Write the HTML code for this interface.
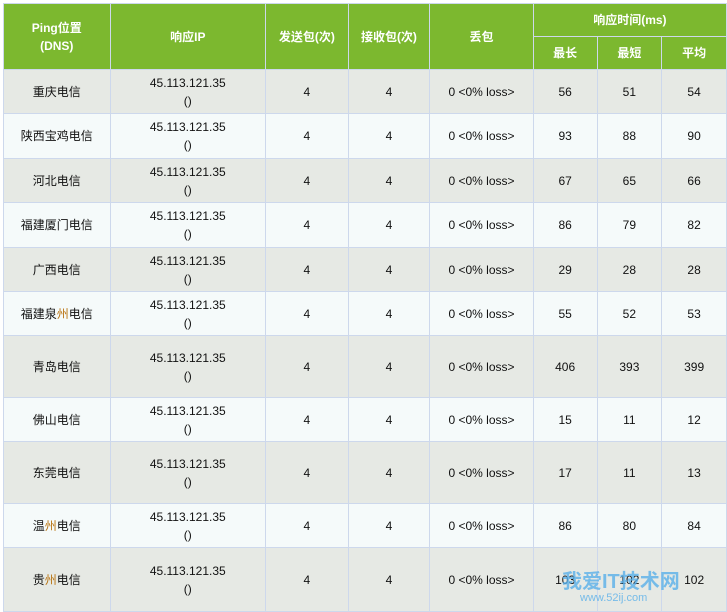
<!DOCTYPE html><html><head><meta charset="utf-8"><style>
body{margin:0;background:#fff;width:727px;height:611px;overflow:hidden;font-family:"Liberation Sans","Noto Sans CJK SC",sans-serif;font-size:12px;color:#111}
table{position:absolute;left:3px;top:3px;border-collapse:collapse;table-layout:fixed}
td,th{border:1px solid #cdd8ec;text-align:center;padding:0;line-height:18px}
th{background:#7cb82f;color:#fff;font-weight:bold}
tr.a td{background:#e6e9e4}
tr.b td{background:#f5fafa}
.o{color:#b8720f}
</style></head><body>
<table>
<colgroup><col style="width:107px"><col style="width:156px"><col style="width:83px"><col style="width:82px"><col style="width:104px"><col style="width:64px"><col style="width:65px"><col style="width:65px"></colgroup>
<tr style="height:33px"><th rowspan="2">Ping位置<br>(DNS)</th><th rowspan="2">响应IP</th><th rowspan="2">发送包(次)</th><th rowspan="2">接收包(次)</th><th rowspan="2">丢包</th><th colspan="3">响应时间(ms)</th></tr>
<tr style="height:33px"><th>最长</th><th>最短</th><th>平均</th></tr>
<tr class="a" style="height:44px"><td>重庆电信</td><td>45.113.121.35<br>()</td><td>4</td><td>4</td><td>0 &lt;0% loss&gt;</td><td>56</td><td>51</td><td>54</td></tr>
<tr class="b" style="height:45px"><td>陕西宝鸡电信</td><td>45.113.121.35<br>()</td><td>4</td><td>4</td><td>0 &lt;0% loss&gt;</td><td>93</td><td>88</td><td>90</td></tr>
<tr class="a" style="height:44px"><td>河北电信</td><td>45.113.121.35<br>()</td><td>4</td><td>4</td><td>0 &lt;0% loss&gt;</td><td>67</td><td>65</td><td>66</td></tr>
<tr class="b" style="height:45px"><td>福建厦门电信</td><td>45.113.121.35<br>()</td><td>4</td><td>4</td><td>0 &lt;0% loss&gt;</td><td>86</td><td>79</td><td>82</td></tr>
<tr class="a" style="height:44px"><td>广西电信</td><td>45.113.121.35<br>()</td><td>4</td><td>4</td><td>0 &lt;0% loss&gt;</td><td>29</td><td>28</td><td>28</td></tr>
<tr class="b" style="height:44px"><td>福建泉<span class="o">州</span>电信</td><td>45.113.121.35<br>()</td><td>4</td><td>4</td><td>0 &lt;0% loss&gt;</td><td>55</td><td>52</td><td>53</td></tr>
<tr class="a" style="height:62px"><td>青岛电信</td><td>45.113.121.35<br>()</td><td>4</td><td>4</td><td>0 &lt;0% loss&gt;</td><td>406</td><td>393</td><td>399</td></tr>
<tr class="b" style="height:44px"><td>佛山电信</td><td>45.113.121.35<br>()</td><td>4</td><td>4</td><td>0 &lt;0% loss&gt;</td><td>15</td><td>11</td><td>12</td></tr>
<tr class="a" style="height:62px"><td>东莞电信</td><td>45.113.121.35<br>()</td><td>4</td><td>4</td><td>0 &lt;0% loss&gt;</td><td>17</td><td>11</td><td>13</td></tr>
<tr class="b" style="height:44px"><td>温<span class="o">州</span>电信</td><td>45.113.121.35<br>()</td><td>4</td><td>4</td><td>0 &lt;0% loss&gt;</td><td>86</td><td>80</td><td>84</td></tr>
<tr class="a" style="height:64px"><td>贵<span class="o">州</span>电信</td><td>45.113.121.35<br>()</td><td>4</td><td>4</td><td>0 &lt;0% loss&gt;</td><td>103</td><td>102</td><td>102</td></tr>
</table>
<div style="position:absolute;left:562px;top:565px;color:#5ab0ea;font-size:20px;font-weight:bold;opacity:.8">我爱IT技术网</div>
<div style="position:absolute;left:580px;top:592px;color:#5ab0ea;font-size:11px;opacity:.8">www.52ij.com</div>
</body></html>
